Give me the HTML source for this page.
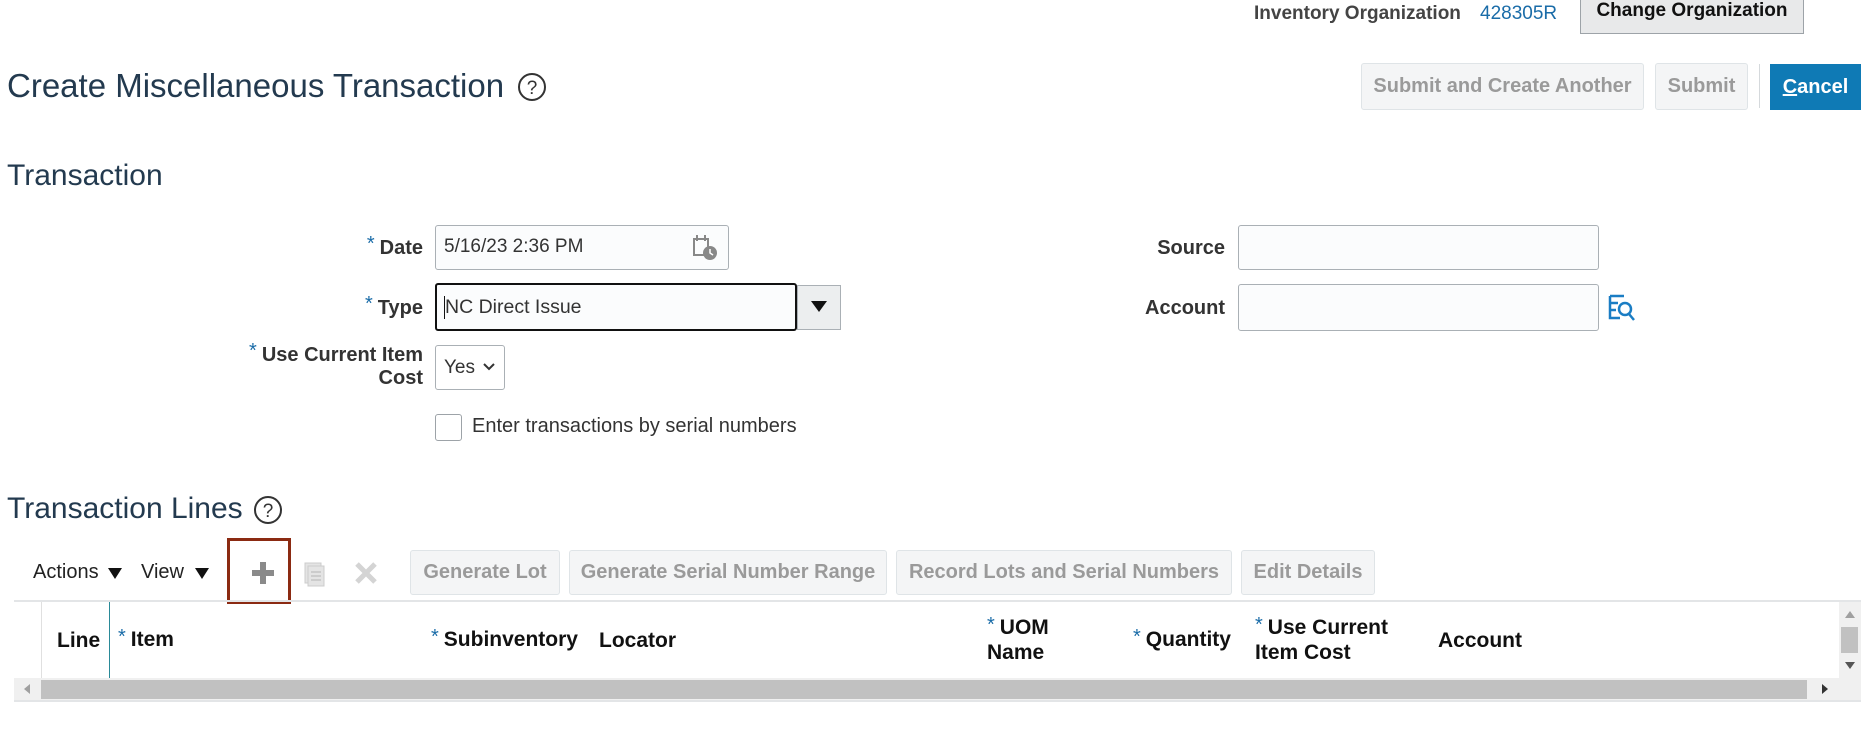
<!DOCTYPE html>
<html><head><meta charset="utf-8"><style>
*{box-sizing:border-box;margin:0;padding:0}
body{width:1874px;height:748px;background:#fff;font-family:"Liberation Sans",Arial,sans-serif;color:#333;position:relative;overflow:hidden}
.a{position:absolute;white-space:nowrap}
.lbl{font-weight:bold;font-size:20px;color:#333;text-align:right}
.st{color:#1a6ca8;font-weight:normal;font-size:20px;vertical-align:top;position:relative;top:-4px;margin-right:5px}
.inp{position:absolute;border:1px solid #aab0b5;border-radius:3px;background:#fbfcfd}
.btn{position:absolute;border:1px solid #dfe4e7;border-radius:3px;background:#f4f5f6;color:#9a9a9a;font-weight:bold;font-size:20px;text-align:center}
.th{position:absolute;font-weight:bold;font-size:21px;color:#111;line-height:25px}
.th .st{top:-2px}
</style></head><body>
<div class="a" style="left:1254px;top:3px;font-size:19px;font-weight:bold;color:#444">Inventory Organization</div>
<div class="a" style="left:1480px;top:3px;font-size:19px;color:#1a6ca8">428305R</div>
<div class="a" style="left:1580px;top:-2px;width:224px;height:36px;background:#e8e9ea;border:1px solid #9da3a8;font-size:19px;font-weight:bold;color:#111;text-align:center;line-height:24px">Change Organization</div>

<div class="a" style="left:7px;top:67px;font-size:33px;color:#233a4f">Create Miscellaneous Transaction</div>
<svg class="a" style="left:517px;top:72px" width="30" height="30" viewBox="0 0 30 30"><circle cx="15" cy="15" r="13" fill="none" stroke="#333" stroke-width="2"/><text x="15" y="22" text-anchor="middle" font-family="Liberation Sans" font-size="19" fill="#333">?</text></svg>

<div class="btn" style="left:1361px;top:63px;width:283px;height:47px;line-height:44px">Submit and Create Another</div>
<div class="btn" style="left:1655px;top:63px;width:93px;height:47px;line-height:44px">Submit</div>
<div class="a" style="left:1759px;top:64px;width:1px;height:44px;background:#d5d9dc"></div>
<div class="a" style="left:1770px;top:64px;width:91px;height:46px;background:#0f7ab5;color:#fff;font-weight:bold;font-size:20px;text-align:center;line-height:46px"><u>C</u>ancel</div>

<div class="a" style="left:7px;top:159px;font-size:30px;color:#233a4f">Transaction</div>

<div class="a lbl" style="right:1451px;top:237px"><span class="st">*</span>Date</div>
<div class="inp" style="left:435px;top:225px;width:294px;height:45px"></div>
<div class="a" style="left:444px;top:236px;font-size:19px;color:#333">5/16/23 2:36 PM</div>
<svg class="a" style="left:692px;top:233px" width="30" height="30" viewBox="0 0 30 30"><rect x="2" y="6" width="14" height="16" fill="none" stroke="#888" stroke-width="2"/><rect x="4" y="2" width="2" height="6" fill="#888"/><rect x="12" y="2" width="2" height="6" fill="#888"/><circle cx="18" cy="20" r="7" fill="#888"/><path d="M18 16v4l3 2" stroke="#fff" stroke-width="1.5" fill="none"/></svg>

<div class="a lbl" style="right:1451px;top:297px"><span class="st">*</span>Type</div>
<div class="a" style="left:435px;top:283px;width:362px;height:48px;border:2px solid #111;border-radius:3px;background:#fbfcfd"></div>
<div class="a" style="left:797px;top:285px;width:44px;height:45px;background:#eceeef;border:1px solid #aab0b5"></div>
<div class="a" style="left:811px;top:301px;width:0;height:0;border-left:8px solid transparent;border-right:8px solid transparent;border-top:11px solid #111"></div>
<div class="a" style="left:444px;top:296px;width:1px;height:23px;background:#111"></div>
<div class="a" style="left:445px;top:296px;font-size:19.5px;color:#333">NC Direct Issue</div>

<div class="a lbl" style="right:1451px;top:344px;line-height:23px"><span class="st">*</span>Use Current Item<br>Cost</div>
<div class="inp" style="left:435px;top:345px;width:70px;height:45px;background:#fff"></div>
<div class="a" style="left:444px;top:357px;font-size:19px;color:#333">Yes</div>
<svg class="a" style="left:482px;top:362px" width="14" height="10" viewBox="0 0 14 10"><path d="M2 2l5 5 5-5" stroke="#333" stroke-width="2" fill="none"/></svg>

<div class="a" style="left:435px;top:414px;width:27px;height:27px;border:1px solid #9da3a8;border-radius:3px"></div>
<div class="a" style="left:472px;top:415px;font-size:20px;color:#333">Enter transactions by serial numbers</div>

<div class="a lbl" style="right:649px;top:237px">Source</div>
<div class="inp" style="left:1238px;top:225px;width:361px;height:45px"></div>
<div class="a lbl" style="right:649px;top:297px">Account</div>
<div class="inp" style="left:1238px;top:284px;width:361px;height:47px"></div>
<svg class="a" style="left:1608px;top:293px" width="28" height="30" viewBox="0 0 28 30"><path d="M2 3h14M2 3v22h10M2 10h8M2 17h6M2 25h8" stroke="#1a7dc4" stroke-width="2.5" fill="none"/><circle cx="17" cy="16" r="6" fill="none" stroke="#1a7dc4" stroke-width="2.5"/><path d="M21 21l5 6" stroke="#1a7dc4" stroke-width="2.5"/></svg>

<div class="a" style="left:7px;top:492px;font-size:30px;color:#233a4f">Transaction Lines</div>
<svg class="a" style="left:253px;top:495px" width="30" height="30" viewBox="0 0 30 30"><circle cx="15" cy="15" r="13" fill="none" stroke="#333" stroke-width="2"/><text x="15" y="22" text-anchor="middle" font-family="Liberation Sans" font-size="19" fill="#333">?</text></svg>

<div class="a" style="left:33px;top:561px;font-size:20px;color:#222">Actions</div>
<div class="a" style="left:108px;top:568px;border-left:7px solid transparent;border-right:7px solid transparent;border-top:11px solid #111"></div>
<div class="a" style="left:141px;top:561px;font-size:20px;color:#222">View</div>
<div class="a" style="left:195px;top:568px;border-left:7px solid transparent;border-right:7px solid transparent;border-top:11px solid #111"></div>
<div class="a" style="left:227px;top:538px;width:64px;height:66px;border:3px solid #8b2a12"></div>
<div class="a" style="left:252px;top:570px;width:22px;height:6px;background:#8a8a8a"></div>
<div class="a" style="left:260px;top:562px;width:6px;height:22px;background:#8a8a8a"></div>
<svg class="a" style="left:303px;top:561px" width="24" height="26" viewBox="0 0 24 26"><rect x="2" y="2" width="16" height="20" fill="#e4e4e4" stroke="#ccc"/><rect x="5" y="5" width="16" height="20" fill="#e4e4e4" stroke="#ccc"/><path d="M8 11h10M8 15h10M8 19h10" stroke="#c4c4c4" stroke-width="1.5"/></svg>
<svg class="a" style="left:354px;top:561px" width="24" height="24" viewBox="0 0 24 24"><path d="M3 3l18 18M21 3L3 21" stroke="#d4d4d4" stroke-width="5"/></svg>

<div class="btn" style="left:410px;top:550px;width:150px;height:45px;line-height:43px">Generate Lot</div>
<div class="btn" style="left:569px;top:550px;width:318px;height:45px;line-height:43px">Generate Serial Number Range</div>
<div class="btn" style="left:896px;top:550px;width:336px;height:45px;line-height:43px">Record Lots and Serial Numbers</div>
<div class="btn" style="left:1241px;top:550px;width:134px;height:45px;line-height:43px">Edit Details</div>

<div class="a" style="left:14px;top:600px;width:1847px;height:2px;background:#e3e5e7"></div>
<div class="a" style="left:41px;top:602px;width:1px;height:76px;background:#e0e0e0"></div>
<div class="a" style="left:109px;top:602px;width:1px;height:76px;background:#2a8a98"></div>
<div class="th" style="left:57px;top:628px">Line</div>
<div class="th" style="left:118px;top:627px"><span class="st">*</span>Item</div>
<div class="th" style="left:431px;top:627px"><span class="st">*</span>Subinventory</div>
<div class="th" style="left:599px;top:628px">Locator</div>
<div class="th" style="left:987px;top:615px"><span class="st">*</span>UOM<br>Name</div>
<div class="th" style="left:1133px;top:627px"><span class="st">*</span>Quantity</div>
<div class="th" style="left:1255px;top:615px"><span class="st">*</span>Use Current<br>Item Cost</div>
<div class="th" style="left:1438px;top:628px">Account</div>

<div class="a" style="left:1839px;top:602px;width:22px;height:76px;background:#f0f0f0"></div>
<div class="a" style="left:1841px;top:627px;width:17px;height:26px;background:#c1c1c1"></div>
<div class="a" style="left:1845px;top:611px;border-left:5px solid transparent;border-right:5px solid transparent;border-bottom:7px solid #a0a0a0"></div>
<div class="a" style="left:1845px;top:662px;border-left:5px solid transparent;border-right:5px solid transparent;border-top:7px solid #555"></div>
<div class="a" style="left:14px;top:678px;width:1847px;height:24px;background:#f0f0f0;border-bottom:2px solid #e3e5e7"></div>
<div class="a" style="left:41px;top:680px;width:1766px;height:19px;background:#c1c1c1"></div>
<div class="a" style="left:24px;top:684px;border-top:5px solid transparent;border-bottom:5px solid transparent;border-right:6px solid #a0a0a0"></div>
<div class="a" style="left:1822px;top:684px;border-top:5px solid transparent;border-bottom:5px solid transparent;border-left:6px solid #333"></div>
</body></html>
